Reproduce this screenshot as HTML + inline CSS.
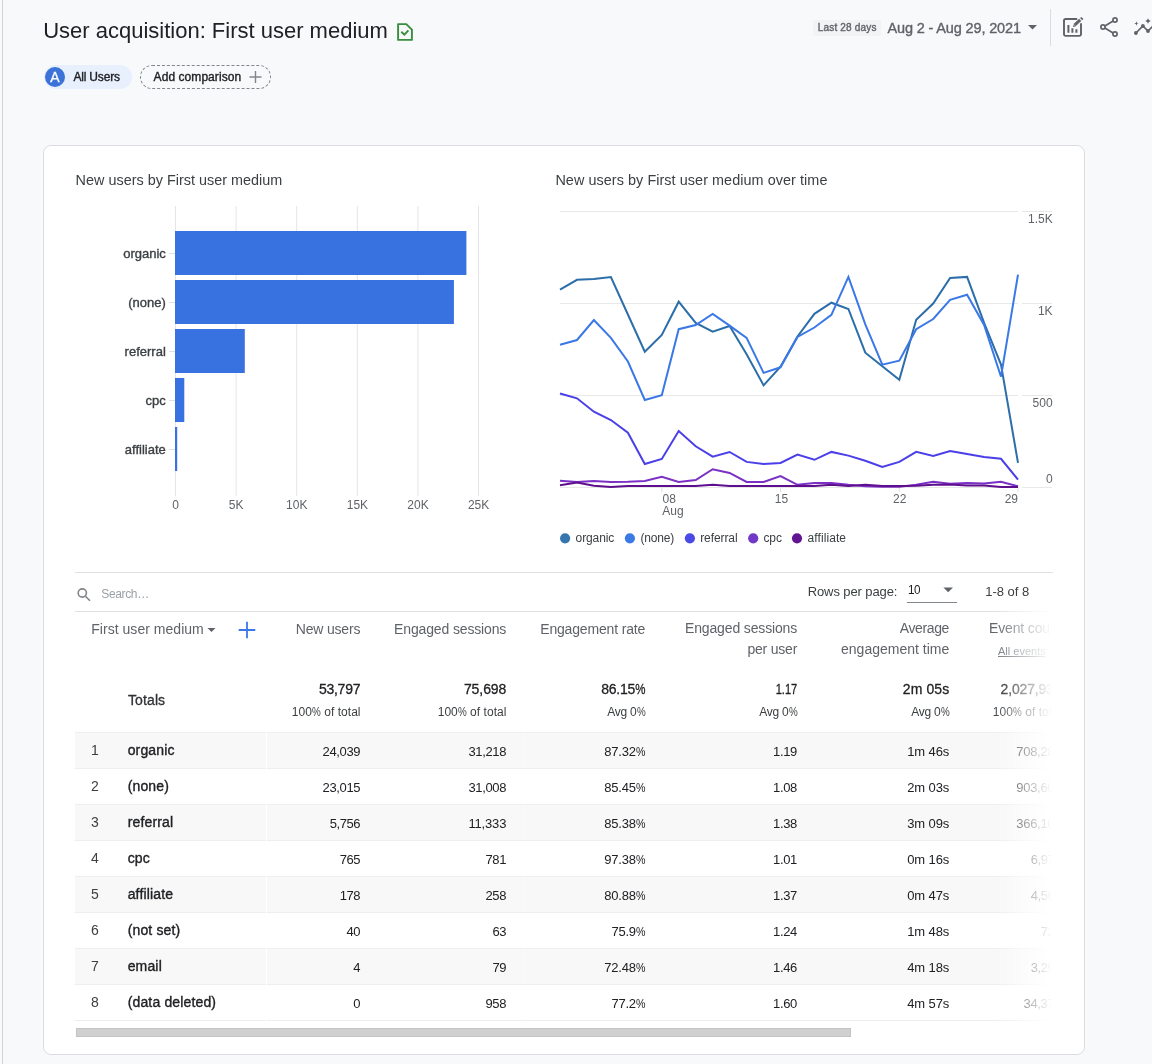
<!DOCTYPE html>
<html lang="en"><head><meta charset="utf-8"><title>User acquisition: First user medium</title>
<style>
*{box-sizing:border-box;margin:0;padding:0}
html,body{width:1152px;height:1064px;overflow:hidden}
body{background:#f8f9fa;font-family:"Liberation Sans",sans-serif;color:#202124;position:relative;-webkit-font-smoothing:antialiased}
.abs{position:absolute;white-space:nowrap;line-height:1}
.t{position:absolute;white-space:nowrap;line-height:1}
.r{text-align:right}
.pc{display:inline-block;transform:scaleX(0.82);transform-origin:100% 50%;margin-left:-0.16em}
.med{-webkit-text-stroke:0.36px currentColor}
#leftline{position:absolute;left:2px;top:0;width:1px;height:1064px;background:#d2d3d4}
#card{position:absolute;left:43px;top:145px;width:1042px;height:910px;background:#fff;border:1px solid #dadce0;border-radius:8px}
svg{position:absolute;left:0;top:0;overflow:visible}
</style></head><body>
<div id="root" style="position:absolute;left:0;top:0;width:1152px;height:1064px;will-change:transform">
<div id="leftline"></div>

<div class="t" id="title" style="top:20.78px;font-size:22px;line-height:20px;color:#202124;left:43.20px;letter-spacing:-0.004px;">User acquisition: First user medium</div>
<div class="abs" id="chipA" style="left:44px;top:65px;width:88px;height:24px;border-radius:12px;background:#e8f0fe"></div>
<div class="abs" id="avatar" style="left:45px;top:67px;width:20px;height:20px;border-radius:50%;background:#3b73d9;color:#fff;font-size:14px;line-height:20px;text-align:center;-webkit-text-stroke:0.3px #fff">A</div>
<div class="t med" id="allusers" style="top:66.64px;font-size:12px;line-height:20px;color:#202124;left:73.40px;letter-spacing:-0.175px;">All Users</div>
<div class="abs" id="chipB" style="left:140px;top:65px;width:131px;height:24px;border-radius:12px;border:1px dashed #80868b"></div>
<div class="t med" id="addcmp" style="top:66.64px;font-size:12px;line-height:20px;color:#202124;left:153.60px;letter-spacing:0.062px;">Add comparison</div>
<div class="abs" id="last28bg" style="left:813px;top:20px;width:68px;height:16px;border-radius:2px;background:#f1f3f4"></div>
<div class="t med" id="last28" style="top:17.54px;font-size:10px;line-height:20px;color:#5f6368;left:817.80px;letter-spacing:0.173px;">Last 28 days</div>
<div class="t med" id="daterange" style="top:18.18px;font-size:14.5px;line-height:20px;color:#5f6368;left:887.50px;letter-spacing:-0.144px;">Aug 2 - Aug 29, 2021</div>
<div class="abs" id="vdiv" style="left:1050px;top:9px;width:1px;height:37px;background:#dadce0"></div>
<div id="card"></div>
<div class="t" id="h1" style="top:170.41px;font-size:14.4px;line-height:20px;color:#3c4043;left:75.60px;letter-spacing:0.010px;">New users by First user medium</div>
<div class="t" id="h2" style="top:170.41px;font-size:14.4px;line-height:20px;color:#3c4043;left:555.40px;letter-spacing:0.064px;">New users by First user medium over time</div>
<svg id="gfx" width="1152" height="1064" viewBox="0 0 1152 1064" font-family="Liberation Sans, sans-serif">
<g id="ticon" fill="none" stroke="#388e3c" stroke-width="1.9" stroke-linejoin="round"><path d="M398.1 24.1H406.3L411.9 29.7V39.9H398.1Z"/><path d="M401.3 31.7L404.4 34.7L408.4 30.4" stroke-linejoin="miter"/></g>
<g id="ic1" fill="none" stroke="#5f6368" stroke-width="1.9"><path d="M1077.2 19H1065.6a1.6 1.6 0 0 0-1.6 1.6V34.3a1.6 1.6 0 0 0 1.6 1.6H1079.4a1.6 1.6 0 0 0 1.6-1.6V23.2"/><path d="M1068.4 25.1V32.8M1072.4 28.2V32.8M1076.4 29.3V32.8" stroke-width="2"/><path d="M1074.6 25.2L1080.2 19.9" stroke-width="3"/><path d="M1081.1 19.2L1082.4 18" stroke-width="3"/><path d="M1073 27l0.6-2.6 2 2z" fill="#5f6368" stroke="none"/></g>
<g id="ic2" fill="none" stroke="#5f6368" stroke-width="1.7"><circle cx="1115" cy="20" r="2.1"/><circle cx="1103" cy="27" r="2.1"/><circle cx="1115" cy="34" r="2.1"/><path d="M1104.9 25.9L1113.1 21.1M1104.9 28.1L1113.1 32.9"/></g>
<g id="ic3" fill="#5f6368" stroke="none"><circle cx="1135.9" cy="33" r="1.9"/><circle cx="1142.9" cy="26" r="1.9"/><circle cx="1148" cy="31" r="1.9"/><path d="M1135.9 33L1142.9 26L1148 31L1154 25" fill="none" stroke="#5f6368" stroke-width="1.7"/><path d="M1136.4 21.3l.6 1.6 1.6.6-1.6.6-.6 1.6-.6-1.6-1.6-.6 1.6-.6z"/><path d="M1148 18.2l.9 1.9 1.9.9-1.9.9-.9 1.9-.9-1.9-1.9-.9 1.9-.9z"/></g>
<path id="plus1" d="M249.5 77h12M255.5 71v12" stroke="#80868b" stroke-width="1.4" fill="none"/>
<path id="darrow" d="M1028 25h9l-4.5 4.5z" fill="#5f6368"/>
<path d="M175.5 206V496" stroke="#e4e5e7" stroke-width="1" fill="none"/>
<path d="M236.1 206V496" stroke="#e4e5e7" stroke-width="1" fill="none"/>
<path d="M296.7 206V496" stroke="#e4e5e7" stroke-width="1" fill="none"/>
<path d="M357.3 206V496" stroke="#e4e5e7" stroke-width="1" fill="none"/>
<path d="M417.9 206V496" stroke="#e4e5e7" stroke-width="1" fill="none"/>
<path d="M478.5 206V496" stroke="#e4e5e7" stroke-width="1" fill="none"/>
<rect x="175" y="231" width="291.4" height="44" fill="#3871e0"/>
<path d="M169 253.5h6" stroke="#e0e0e0" stroke-width="1"/>
<rect x="175" y="280" width="278.9" height="44" fill="#3871e0"/>
<path d="M169 302.5h6" stroke="#e0e0e0" stroke-width="1"/>
<rect x="175" y="329" width="69.8" height="44" fill="#3871e0"/>
<path d="M169 351.5h6" stroke="#e0e0e0" stroke-width="1"/>
<rect x="175" y="378" width="9.3" height="44" fill="#3871e0"/>
<path d="M169 400.5h6" stroke="#e0e0e0" stroke-width="1"/>
<rect x="175" y="427" width="2.2" height="44" fill="#3871e0"/>
<path d="M169 449.5h6" stroke="#e0e0e0" stroke-width="1"/>
<path d="M560 211.5H1018M1022 211.5H1052" stroke="#e8e8e8" stroke-width="1" fill="none"/>
<path d="M560 303.5H1018M1022 303.5H1052" stroke="#e8e8e8" stroke-width="1" fill="none"/>
<path d="M560 395.5H1018M1022 395.5H1052" stroke="#e8e8e8" stroke-width="1" fill="none"/>
<path d="M560 487.5H1018M1022 487.5H1052" stroke="#e8e8e8" stroke-width="1" fill="none"/>
<path d="M661.8 487v5" stroke="#e0e0e0" stroke-width="1"/>
<path d="M780.5 487v5" stroke="#e0e0e0" stroke-width="1"/>
<path d="M899.3 487v5" stroke="#e0e0e0" stroke-width="1"/>
<path d="M1018.0 487v5" stroke="#e0e0e0" stroke-width="1"/>
<polyline id="l_organic" points="560.0,289.6 577.0,279.8 593.9,279.0 610.9,277.1 627.9,314.5 644.8,351.7 661.8,335.0 678.7,301.7 695.7,322.9 712.7,331.7 729.6,326.0 746.6,354.2 763.6,385.4 780.5,366.7 797.5,336.5 814.4,313.8 831.4,302.7 848.4,309.0 865.3,352.7 882.3,366.3 899.3,379.8 916.2,319.8 933.2,303.5 950.1,277.9 967.1,276.9 984.1,322.9 1001.0,364.6 1018.0,462.9" fill="none" stroke="#2c6ea9" stroke-width="2" stroke-linejoin="miter"/>
<polyline id="l_none" points="560.0,344.8 577.0,340.0 593.9,320.0 610.9,337.9 627.9,361.5 644.8,400.0 661.8,395.2 678.7,329.2 695.7,325.0 712.7,314.0 729.6,325.6 746.6,337.9 763.6,372.9 780.5,367.3 797.5,336.9 814.4,327.5 831.4,314.8 848.4,276.9 865.3,324.4 882.3,364.6 899.3,360.6 916.2,329.2 933.2,319.0 950.1,299.8 967.1,294.8 984.1,325.0 1001.0,376.7 1018.0,274.6" fill="none" stroke="#3b78e7" stroke-width="2" stroke-linejoin="miter"/>
<polyline id="l_referral" points="560.0,393.5 577.0,398.3 593.9,411.7 610.9,420.0 627.9,432.7 644.8,464.0 661.8,459.0 678.7,431.0 695.7,446.3 712.7,456.7 729.6,452.0 746.6,461.9 763.6,464.0 780.5,463.0 797.5,454.6 814.4,459.8 831.4,451.9 848.4,455.6 865.3,460.8 882.3,467.0 899.3,461.9 916.2,451.9 933.2,456.0 950.1,451.0 967.1,454.0 984.1,457.0 1001.0,458.8 1018.0,479.6" fill="none" stroke="#4a3fe8" stroke-width="2" stroke-linejoin="miter"/>
<polyline id="l_cpc" points="560.0,480.8 577.0,481.9 593.9,481.0 610.9,481.9 627.9,481.7 644.8,481.0 661.8,476.9 678.7,481.9 695.7,480.0 712.7,469.2 729.6,472.9 746.6,481.9 763.6,481.9 780.5,476.0 797.5,484.8 814.4,483.0 831.4,483.0 848.4,484.8 865.3,486.2 882.3,486.7 899.3,486.7 916.2,484.8 933.2,481.7 950.1,483.8 967.1,483.0 984.1,483.5 1001.0,481.7 1018.0,486.3" fill="none" stroke="#7b2fc4" stroke-width="2" stroke-linejoin="miter"/>
<polyline id="l_affiliate" points="560.0,485.2 577.0,482.5 593.9,485.8 610.9,486.9 627.9,486.0 644.8,486.0 661.8,486.0 678.7,486.0 695.7,486.0 712.7,484.8 729.6,486.0 746.6,486.0 763.6,486.0 780.5,486.0 797.5,486.0 814.4,486.0 831.4,484.8 848.4,486.0 865.3,484.8 882.3,486.0 899.3,486.0 916.2,485.8 933.2,484.8 950.1,484.4 967.1,485.4 984.1,485.6 1001.0,486.9 1018.0,486.9" fill="none" stroke="#5e0f8e" stroke-width="2" stroke-linejoin="miter"/>
<circle cx="565.1" cy="538.3" r="5.1" fill="#3576af"/>
<circle cx="629.9" cy="538.3" r="5.1" fill="#3b7ae4"/>
<circle cx="689.9" cy="538.3" r="5.1" fill="#4a48e6"/>
<circle cx="753.2" cy="538.3" r="5.1" fill="#7238c8"/>
<circle cx="797" cy="538.3" r="5.1" fill="#621590"/>
</svg>
<div class="t med" id="bl0" style="top:244.20px;font-size:13px;line-height:20px;color:#3c4043;right:986.20px;text-align:right;">organic</div>
<div class="t med" id="bl1" style="top:293.20px;font-size:13px;line-height:20px;color:#3c4043;right:986.19px;text-align:right;">(none)</div>
<div class="t med" id="bl2" style="top:342.20px;font-size:13px;line-height:20px;color:#3c4043;right:986.23px;text-align:right;">referral</div>
<div class="t med" id="bl3" style="top:391.20px;font-size:13px;line-height:20px;color:#3c4043;right:986.18px;text-align:right;">cpc</div>
<div class="t med" id="bl4" style="top:440.20px;font-size:13px;line-height:20px;color:#3c4043;right:986.19px;text-align:right;">affiliate</div>
<div class="t" id="bx0" style="top:495.04px;font-size:12px;line-height:20px;color:#5f6368;left:25.61px;width:300px;text-align:center;">0</div>
<div class="t" id="bx1" style="top:495.04px;font-size:12px;line-height:20px;color:#5f6368;left:86.19px;width:300px;text-align:center;">5K</div>
<div class="t" id="bx2" style="top:495.04px;font-size:12px;line-height:20px;color:#5f6368;left:146.80px;width:300px;text-align:center;">10K</div>
<div class="t" id="bx3" style="top:495.04px;font-size:12px;line-height:20px;color:#5f6368;left:207.40px;width:300px;text-align:center;">15K</div>
<div class="t" id="bx4" style="top:495.04px;font-size:12px;line-height:20px;color:#5f6368;left:268.00px;width:300px;text-align:center;">20K</div>
<div class="t" id="bx5" style="top:495.04px;font-size:12px;line-height:20px;color:#5f6368;left:328.60px;width:300px;text-align:center;">25K</div>
<div class="t" style="top:208.94px;font-size:12px;line-height:20px;color:#5f6368;right:99.37px;text-align:right;">1.5K</div>
<div class="t" style="top:300.84px;font-size:12px;line-height:20px;color:#5f6368;right:99.42px;text-align:right;">1K</div>
<div class="t" style="top:393.04px;font-size:12px;line-height:20px;color:#5f6368;right:99.42px;text-align:right;">500</div>
<div class="t" style="top:468.64px;font-size:12px;line-height:20px;color:#5f6368;right:99.39px;text-align:right;">0</div>
<div class="t" style="top:488.74px;font-size:12px;line-height:20px;color:#5f6368;left:662.50px;">08</div>
<div class="t" style="top:500.64px;font-size:12px;line-height:20px;color:#5f6368;left:662.30px;">Aug</div>
<div class="t" style="top:488.74px;font-size:12px;line-height:20px;color:#5f6368;left:631.41px;width:300px;text-align:center;">15</div>
<div class="t" style="top:488.74px;font-size:12px;line-height:20px;color:#5f6368;left:749.81px;width:300px;text-align:center;">22</div>
<div class="t" style="top:488.74px;font-size:12px;line-height:20px;color:#5f6368;right:133.97px;text-align:right;">29</div>
<div class="t" style="top:527.94px;font-size:12px;line-height:20px;color:#3c4043;left:575.60px;letter-spacing:-0.110px;">organic</div>
<div class="t" style="top:527.94px;font-size:12px;line-height:20px;color:#3c4043;left:640.40px;letter-spacing:-0.156px;">(none)</div>
<div class="t" style="top:527.94px;font-size:12px;line-height:20px;color:#3c4043;left:700.20px;letter-spacing:-0.091px;">referral</div>
<div class="t" style="top:527.94px;font-size:12px;line-height:20px;color:#3c4043;left:763.40px;letter-spacing:-0.030px;">cpc</div>
<div class="t" style="top:527.94px;font-size:12px;line-height:20px;color:#3c4043;left:807.50px;letter-spacing:0.088px;">affiliate</div>
<div id="tbl" style="position:absolute;left:75px;top:572px;width:978px;height:470px;overflow:hidden">
<div class="abs" style="left:0;top:0;width:978px;height:1px;background:#e0e0e0"></div>
<div class="abs" style="left:0;top:39px;width:978px;height:1px;background:#e0e0e0"></div>
<div class="abs" style="left:0;top:160px;width:978px;height:37px;background:#f8f8f8;border-top:1px solid #eee;border-bottom:1px solid #eee"></div>
<div class="abs" style="left:0;top:196px;width:978px;height:37px;background:#fff;border-top:1px solid #eee;border-bottom:1px solid #eee"></div>
<div class="abs" style="left:0;top:232px;width:978px;height:37px;background:#f8f8f8;border-top:1px solid #eee;border-bottom:1px solid #eee"></div>
<div class="abs" style="left:0;top:268px;width:978px;height:37px;background:#fff;border-top:1px solid #eee;border-bottom:1px solid #eee"></div>
<div class="abs" style="left:0;top:304px;width:978px;height:37px;background:#f8f8f8;border-top:1px solid #eee;border-bottom:1px solid #eee"></div>
<div class="abs" style="left:0;top:340px;width:978px;height:37px;background:#fff;border-top:1px solid #eee;border-bottom:1px solid #eee"></div>
<div class="abs" style="left:0;top:376px;width:978px;height:37px;background:#f8f8f8;border-top:1px solid #eee;border-bottom:1px solid #eee"></div>
<div class="abs" style="left:0;top:412px;width:978px;height:37px;background:#fff;border-top:1px solid #eee;border-bottom:1px solid #eee"></div>
<div class="abs" style="left:190.5px;top:160px;width:1.5px;height:289px;background:#fff;opacity:.9"></div>
<div class="abs" style="left:448px;top:160px;width:1px;height:289px;background:#fff;opacity:.45"></div>
</div>
<div class="t" id="search" style="top:584.14px;font-size:12px;line-height:20px;color:#9aa0a6;left:101.30px;letter-spacing:-0.357px;">Search…</div>
<div class="t" id="rpp" style="top:582.40px;font-size:13px;line-height:20px;color:#3c4043;left:807.70px;letter-spacing:-0.097px;">Rows per page:</div>
<div class="t" id="rpp10" style="top:579.60px;font-size:13px;line-height:20px;color:#202124;left:907.90px;letter-spacing:-0.450px;transform:scaleX(0.901);transform-origin:0 50%;">10</div>
<div class="t" id="range" style="top:582.40px;font-size:13px;line-height:20px;color:#3c4043;left:985.30px;letter-spacing:-0.039px;">1-8 of 8</div>
<div class="abs" style="left:907px;top:602px;width:50px;height:1px;background:#80868b"></div>
<div class="t" id="th0" style="top:619.35px;font-size:14px;line-height:20px;color:#5f6368;left:91.25px;letter-spacing:0.031px;">First user medium</div>
<div class="t" id="th1" style="top:619.35px;font-size:14px;line-height:20px;color:#5f6368;right:791.69px;text-align:right;letter-spacing:-0.169px;">New users</div>
<div class="t" id="th2" style="top:619.35px;font-size:14px;line-height:20px;color:#5f6368;right:645.78px;text-align:right;letter-spacing:-0.143px;">Engaged sessions</div>
<div class="t" id="th3" style="top:619.35px;font-size:14px;line-height:20px;color:#5f6368;right:506.83px;text-align:right;letter-spacing:-0.163px;">Engagement rate</div>
<div class="t" id="th4a" style="top:618.35px;font-size:14px;line-height:20px;color:#5f6368;right:354.88px;text-align:right;letter-spacing:-0.143px;">Engaged sessions</div>
<div class="t" id="th4b" style="top:639.35px;font-size:14px;line-height:20px;color:#5f6368;right:354.93px;text-align:right;letter-spacing:-0.211px;">per user</div>
<div class="t" id="th5a" style="top:618.35px;font-size:14px;line-height:20px;color:#5f6368;right:203.05px;text-align:right;letter-spacing:-0.378px;">Average</div>
<div class="t" id="th5b" style="top:639.35px;font-size:14px;line-height:20px;color:#5f6368;right:202.66px;text-align:right;letter-spacing:0.011px;">engagement time</div>
<div class="t" id="th6a" style="top:618.35px;font-size:14px;line-height:20px;color:#5f6368;left:989.00px;letter-spacing:-0.142px;">Event count</div>
<div class="t" id="th6b" style="top:640.69px;font-size:11px;line-height:20px;color:#70757a;left:998.00px;text-decoration:underline;">All events</div>
<div class="t med" id="totals" style="top:690.15px;font-size:14px;line-height:20px;color:#303134;left:127.90px;letter-spacing:0.132px;-webkit-text-stroke-width:0.3px;">Totals</div>
<div class="t med" id="tv0" style="top:679.25px;font-size:14px;line-height:20px;color:#202124;right:791.77px;text-align:right;letter-spacing:-0.248px;-webkit-text-stroke-width:0.28px;">53,797</div>
<div class="t" id="ts0" style="top:702.24px;font-size:12px;line-height:20px;color:#3c4043;right:791.42px;text-align:right;letter-spacing:0.050px;">100<span class="pc">%</span> of total</div>
<div class="t med" id="tv1" style="top:679.25px;font-size:14px;line-height:20px;color:#202124;right:645.69px;text-align:right;letter-spacing:-0.068px;-webkit-text-stroke-width:0.28px;">75,698</div>
<div class="t" id="ts1" style="top:702.24px;font-size:12px;line-height:20px;color:#3c4043;right:645.52px;text-align:right;letter-spacing:0.050px;">100<span class="pc">%</span> of total</div>
<div class="t med" id="tv2" style="top:679.25px;font-size:14px;line-height:20px;color:#202124;right:506.93px;text-align:right;letter-spacing:-0.244px;-webkit-text-stroke-width:0.28px;">86.15<span class="pc">%</span></div>
<div class="t" id="ts2" style="top:702.24px;font-size:12px;line-height:20px;color:#3c4043;right:506.94px;text-align:right;letter-spacing:-0.228px;">Avg 0<span class="pc">%</span></div>
<div class="t med" id="tv3" style="top:679.25px;font-size:14px;line-height:20px;color:#202124;right:354.68px;text-align:right;transform:scaleX(0.790);transform-origin:100% 50%;-webkit-text-stroke-width:0.28px;">1.17</div>
<div class="t" id="ts3" style="top:702.24px;font-size:12px;line-height:20px;color:#3c4043;right:354.94px;text-align:right;letter-spacing:-0.228px;">Avg 0<span class="pc">%</span></div>
<div class="t med" id="tv4" style="top:679.25px;font-size:14px;line-height:20px;color:#202124;right:202.57px;text-align:right;letter-spacing:0.136px;-webkit-text-stroke-width:0.28px;">2m 05s</div>
<div class="t" id="ts4" style="top:702.24px;font-size:12px;line-height:20px;color:#3c4043;right:202.94px;text-align:right;letter-spacing:-0.228px;">Avg 0<span class="pc">%</span></div>
<div class="t med" id="tv5" style="top:679.25px;font-size:14px;line-height:20px;color:#202124;right:90.69px;text-align:right;letter-spacing:-0.175px;-webkit-text-stroke-width:0.28px;">2,027,932</div>
<div class="t" id="ts5" style="top:702.24px;font-size:12px;line-height:20px;color:#3c4043;right:90.42px;text-align:right;letter-spacing:0.050px;">100<span class="pc">%</span> of total</div>
<div class="t" id="ri0" style="top:740.45px;font-size:14px;line-height:20px;color:#3c4043;left:-55.19px;width:300px;text-align:center;">1</div>
<div class="t med" id="rn0" style="top:740.45px;font-size:14px;line-height:20px;color:#202124;left:127.70px;letter-spacing:0.150px;">organic</div>
<div class="t" id="rv0_0" style="top:741.90px;font-size:13px;line-height:20px;color:#202124;right:791.88px;text-align:right;letter-spacing:-0.367px;">24,039</div>
<div class="t" id="rv0_1" style="top:741.90px;font-size:13px;line-height:20px;color:#202124;right:645.98px;text-align:right;letter-spacing:-0.367px;">31,218</div>
<div class="t" id="rv0_2" style="top:741.90px;font-size:13px;line-height:20px;color:#202124;right:506.87px;text-align:right;letter-spacing:-0.189px;">87.32<span class="pc">%</span></div>
<div class="t" id="rv0_3" style="top:741.90px;font-size:13px;line-height:20px;color:#202124;right:355.04px;text-align:right;letter-spacing:-0.354px;">1.19</div>
<div class="t" id="rv0_4" style="top:741.90px;font-size:13px;line-height:20px;color:#202124;right:202.82px;text-align:right;letter-spacing:-0.115px;">1m 46s</div>
<div class="t" id="rv0_5" style="top:741.90px;font-size:13px;line-height:20px;color:#202124;right:90.79px;text-align:right;letter-spacing:-0.292px;">708,284</div>
<div class="t" id="ri1" style="top:776.45px;font-size:14px;line-height:20px;color:#3c4043;left:-55.19px;width:300px;text-align:center;">2</div>
<div class="t med" id="rn1" style="top:776.45px;font-size:14px;line-height:20px;color:#202124;left:127.70px;letter-spacing:0.150px;">(none)</div>
<div class="t" id="rv1_0" style="top:777.90px;font-size:13px;line-height:20px;color:#202124;right:791.88px;text-align:right;letter-spacing:-0.367px;">23,015</div>
<div class="t" id="rv1_1" style="top:777.90px;font-size:13px;line-height:20px;color:#202124;right:645.98px;text-align:right;letter-spacing:-0.367px;">31,008</div>
<div class="t" id="rv1_2" style="top:777.90px;font-size:13px;line-height:20px;color:#202124;right:506.87px;text-align:right;letter-spacing:-0.189px;">85.45<span class="pc">%</span></div>
<div class="t" id="rv1_3" style="top:777.90px;font-size:13px;line-height:20px;color:#202124;right:355.04px;text-align:right;letter-spacing:-0.354px;">1.08</div>
<div class="t" id="rv1_4" style="top:777.90px;font-size:13px;line-height:20px;color:#202124;right:202.82px;text-align:right;letter-spacing:-0.115px;">2m 03s</div>
<div class="t" id="rv1_5" style="top:777.90px;font-size:13px;line-height:20px;color:#202124;right:90.79px;text-align:right;letter-spacing:-0.292px;">903,606</div>
<div class="t" id="ri2" style="top:812.45px;font-size:14px;line-height:20px;color:#3c4043;left:-55.19px;width:300px;text-align:center;">3</div>
<div class="t med" id="rn2" style="top:812.45px;font-size:14px;line-height:20px;color:#202124;left:127.70px;letter-spacing:0.150px;">referral</div>
<div class="t" id="rv2_0" style="top:813.90px;font-size:13px;line-height:20px;color:#202124;right:791.98px;text-align:right;letter-spacing:-0.450px;">5,756</div>
<div class="t" id="rv2_1" style="top:813.90px;font-size:13px;line-height:20px;color:#202124;right:645.78px;text-align:right;letter-spacing:-0.172px;">11,333</div>
<div class="t" id="rv2_2" style="top:813.90px;font-size:13px;line-height:20px;color:#202124;right:506.87px;text-align:right;letter-spacing:-0.189px;">85.38<span class="pc">%</span></div>
<div class="t" id="rv2_3" style="top:813.90px;font-size:13px;line-height:20px;color:#202124;right:355.04px;text-align:right;letter-spacing:-0.354px;">1.38</div>
<div class="t" id="rv2_4" style="top:813.90px;font-size:13px;line-height:20px;color:#202124;right:202.82px;text-align:right;letter-spacing:-0.115px;">3m 09s</div>
<div class="t" id="rv2_5" style="top:813.90px;font-size:13px;line-height:20px;color:#202124;right:90.79px;text-align:right;letter-spacing:-0.292px;">366,105</div>
<div class="t" id="ri3" style="top:848.45px;font-size:14px;line-height:20px;color:#3c4043;left:-55.19px;width:300px;text-align:center;">4</div>
<div class="t med" id="rn3" style="top:848.45px;font-size:14px;line-height:20px;color:#202124;left:127.70px;letter-spacing:0.150px;">cpc</div>
<div class="t" id="rv3_0" style="top:849.90px;font-size:13px;line-height:20px;color:#202124;right:791.97px;text-align:right;letter-spacing:-0.450px;">765</div>
<div class="t" id="rv3_1" style="top:849.90px;font-size:13px;line-height:20px;color:#202124;right:646.07px;text-align:right;letter-spacing:-0.450px;">781</div>
<div class="t" id="rv3_2" style="top:849.90px;font-size:13px;line-height:20px;color:#202124;right:506.87px;text-align:right;letter-spacing:-0.189px;">97.38<span class="pc">%</span></div>
<div class="t" id="rv3_3" style="top:849.90px;font-size:13px;line-height:20px;color:#202124;right:355.04px;text-align:right;letter-spacing:-0.354px;">1.01</div>
<div class="t" id="rv3_4" style="top:849.90px;font-size:13px;line-height:20px;color:#202124;right:202.82px;text-align:right;letter-spacing:-0.115px;">0m 16s</div>
<div class="t" id="rv3_5" style="top:849.90px;font-size:13px;line-height:20px;color:#202124;right:90.98px;text-align:right;letter-spacing:-0.450px;">6,972</div>
<div class="t" id="ri4" style="top:884.45px;font-size:14px;line-height:20px;color:#3c4043;left:-55.19px;width:300px;text-align:center;">5</div>
<div class="t med" id="rn4" style="top:884.45px;font-size:14px;line-height:20px;color:#202124;left:127.70px;letter-spacing:0.150px;">affiliate</div>
<div class="t" id="rv4_0" style="top:885.90px;font-size:13px;line-height:20px;color:#202124;right:791.97px;text-align:right;letter-spacing:-0.450px;">178</div>
<div class="t" id="rv4_1" style="top:885.90px;font-size:13px;line-height:20px;color:#202124;right:646.07px;text-align:right;letter-spacing:-0.450px;">258</div>
<div class="t" id="rv4_2" style="top:885.90px;font-size:13px;line-height:20px;color:#202124;right:506.87px;text-align:right;letter-spacing:-0.189px;">80.88<span class="pc">%</span></div>
<div class="t" id="rv4_3" style="top:885.90px;font-size:13px;line-height:20px;color:#202124;right:355.04px;text-align:right;letter-spacing:-0.354px;">1.37</div>
<div class="t" id="rv4_4" style="top:885.90px;font-size:13px;line-height:20px;color:#202124;right:202.82px;text-align:right;letter-spacing:-0.115px;">0m 47s</div>
<div class="t" id="rv4_5" style="top:885.90px;font-size:13px;line-height:20px;color:#202124;right:90.98px;text-align:right;letter-spacing:-0.450px;">4,563</div>
<div class="t" id="ri5" style="top:920.45px;font-size:14px;line-height:20px;color:#3c4043;left:-55.19px;width:300px;text-align:center;">6</div>
<div class="t med" id="rn5" style="top:920.45px;font-size:14px;line-height:20px;color:#202124;left:127.70px;letter-spacing:0.150px;">(not set)</div>
<div class="t" id="rv5_0" style="top:921.90px;font-size:13px;line-height:20px;color:#202124;right:791.92px;text-align:right;letter-spacing:-0.450px;">40</div>
<div class="t" id="rv5_1" style="top:921.90px;font-size:13px;line-height:20px;color:#202124;right:646.02px;text-align:right;letter-spacing:-0.450px;">63</div>
<div class="t" id="rv5_2" style="top:921.90px;font-size:13px;line-height:20px;color:#202124;right:506.95px;text-align:right;letter-spacing:-0.258px;">75.9<span class="pc">%</span></div>
<div class="t" id="rv5_3" style="top:921.90px;font-size:13px;line-height:20px;color:#202124;right:355.04px;text-align:right;letter-spacing:-0.354px;">1.24</div>
<div class="t" id="rv5_4" style="top:921.90px;font-size:13px;line-height:20px;color:#202124;right:202.82px;text-align:right;letter-spacing:-0.115px;">1m 48s</div>
<div class="t" id="rv5_5" style="top:921.90px;font-size:13px;line-height:20px;color:#202124;right:90.97px;text-align:right;letter-spacing:-0.450px;">727</div>
<div class="t" id="ri6" style="top:956.45px;font-size:14px;line-height:20px;color:#3c4043;left:-55.19px;width:300px;text-align:center;">7</div>
<div class="t med" id="rn6" style="top:956.45px;font-size:14px;line-height:20px;color:#202124;left:127.70px;letter-spacing:0.150px;">email</div>
<div class="t" id="rv6_0" style="top:957.90px;font-size:13px;line-height:20px;color:#202124;right:791.48px;text-align:right;">4</div>
<div class="t" id="rv6_1" style="top:957.90px;font-size:13px;line-height:20px;color:#202124;right:646.02px;text-align:right;letter-spacing:-0.450px;">79</div>
<div class="t" id="rv6_2" style="top:957.90px;font-size:13px;line-height:20px;color:#202124;right:506.87px;text-align:right;letter-spacing:-0.189px;">72.48<span class="pc">%</span></div>
<div class="t" id="rv6_3" style="top:957.90px;font-size:13px;line-height:20px;color:#202124;right:355.04px;text-align:right;letter-spacing:-0.354px;">1.46</div>
<div class="t" id="rv6_4" style="top:957.90px;font-size:13px;line-height:20px;color:#202124;right:202.82px;text-align:right;letter-spacing:-0.115px;">4m 18s</div>
<div class="t" id="rv6_5" style="top:957.90px;font-size:13px;line-height:20px;color:#202124;right:90.98px;text-align:right;letter-spacing:-0.450px;">3,291</div>
<div class="t" id="ri7" style="top:992.45px;font-size:14px;line-height:20px;color:#3c4043;left:-55.19px;width:300px;text-align:center;">8</div>
<div class="t med" id="rn7" style="top:992.45px;font-size:14px;line-height:20px;color:#202124;left:127.70px;letter-spacing:0.150px;">(data deleted)</div>
<div class="t" id="rv7_0" style="top:993.90px;font-size:13px;line-height:20px;color:#202124;right:791.48px;text-align:right;">0</div>
<div class="t" id="rv7_1" style="top:993.90px;font-size:13px;line-height:20px;color:#202124;right:646.07px;text-align:right;letter-spacing:-0.450px;">958</div>
<div class="t" id="rv7_2" style="top:993.90px;font-size:13px;line-height:20px;color:#202124;right:506.95px;text-align:right;letter-spacing:-0.258px;">77.2<span class="pc">%</span></div>
<div class="t" id="rv7_3" style="top:993.90px;font-size:13px;line-height:20px;color:#202124;right:355.04px;text-align:right;letter-spacing:-0.354px;">1.60</div>
<div class="t" id="rv7_4" style="top:993.90px;font-size:13px;line-height:20px;color:#202124;right:202.82px;text-align:right;letter-spacing:-0.115px;">4m 57s</div>
<div class="t" id="rv7_5" style="top:993.90px;font-size:13px;line-height:20px;color:#202124;right:90.88px;text-align:right;letter-spacing:-0.367px;">34,371</div>
<div class="abs" id="fade" style="left:993px;top:611px;width:60px;height:410px;background:linear-gradient(to right,rgba(255,255,255,0),rgba(255,255,255,.55) 50%,#fff 98%)"></div>
<div class="abs" style="left:1053px;top:611px;width:31px;height:422px;background:#fff"></div>
<div class="abs" id="sbar" style="left:76px;top:1028px;width:775px;height:9px;background:#d0d0d0;border:1px solid #c4c4c4"></div>
<svg width="1152" height="1064" viewBox="0 0 1152 1064">
<g id="sicon" fill="none" stroke="#80868b" stroke-width="1.6"><circle cx="82.3" cy="593" r="4.1"/><path d="M85.4 596.2l4.6 4.6" stroke-linecap="butt"/></g>
<path d="M207.5 628h8l-4 4z" fill="#5f6368"/>
<path d="M238.7 630h16.6M247 621.7v16.6" stroke="#3b78e7" stroke-width="1.8" fill="none"/>
<path d="M943.4 587.5h9.6l-4.8 4.8z" fill="#5f6368"/>
</svg>
</div></body></html>
